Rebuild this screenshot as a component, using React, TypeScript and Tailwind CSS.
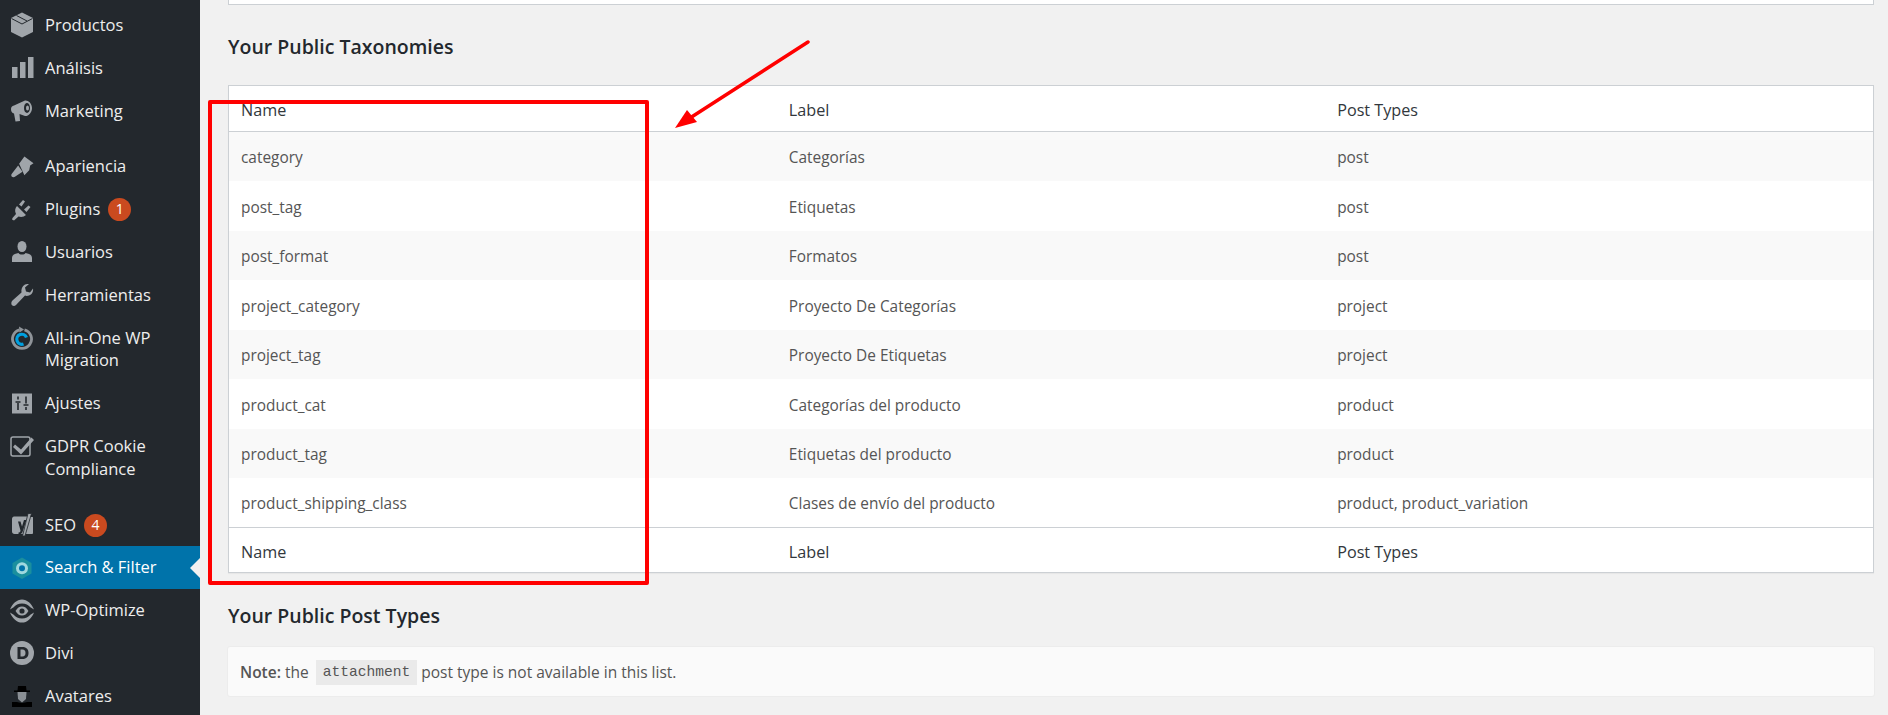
import type { ReactNode } from "react";

const font = "font-['Open_Sans','Noto_Sans',sans-serif]";

type MenuItem = {
  label: ReactNode;
  icon: ReactNode;
  badge?: number;
  active?: boolean;
  gap?: boolean;
};

const BoxIcon = (
  <svg viewBox="0 0 24 26" className="h-[26px] w-6" fill="#a0a5aa">
    <path d="M12 0.5 23 6v14l-11 5.5L1 20V6z" />
    <path d="M1.5 6.5 12 12l10.500-5.500M6.500 3.500 17 9" fill="none" stroke="#23282d" strokeWidth="1" />
  </svg>
);

const BarsIcon = (
  <svg viewBox="0 0 24 24" className="h-6 w-6" fill="#a0a5aa">
    <rect x="2" y="11" width="5.500" height="11" />
    <rect x="10" y="6" width="5.500" height="16" />
    <rect x="18" y="1" width="5.500" height="21" />
  </svg>
);

const MegaphoneIcon = (
  <svg viewBox="0 0 24 24" className="h-6 w-6" fill="#a0a5aa">
    <path d="M1 10c0-2 1-3 3-3.500l11-5c3-.5 7 2.500 7 7.500s-4 8.500-7 8l-5.500-2L10 22l-4.500.5L4 14.500C2 14 1 12.500 1 10z" />
    <ellipse cx="17" cy="9" rx="3" ry="5" fill="#23282d" />
    <ellipse cx="17.500" cy="9" rx="1.500" ry="2.500" />
  </svg>
);

const BrushIcon = (
  <svg viewBox="0 0 25 24" className="h-6 w-[25px]" fill="#a0a5aa">
    <path d="M15 1 24.500 8 21 10.500 20 15.500 15 20.500 9.500 8.500z" />
    <path d="M8.500 10.500 13 17 5.500 22c-2 1.500-5 0-4-2.500z" />
  </svg>
);

const PlugIcon = (
  <svg viewBox="0 0 24 24" className="h-6 w-6" fill="#a0a5aa">
    <path d="M7 8 16 17c-2 2-5 2.500-7.500 1.500L4 22.500l-2-1 .5-1.500L6 16C4.500 13 5 10 7 8z" />
    <path d="M9 6.500 13 2l2 1.500-3.500 5zM14 11.500l4.500-4 2 1.500-4 5z" />
  </svg>
);

const UserIcon = (
  <svg viewBox="0 0 24 24" className="h-6 w-6" fill="#a0a5aa">
    <ellipse cx="12" cy="6.500" rx="4.500" ry="5.500" />
    <path d="M2 22v-4c0-3 3-4.500 6.500-5 1 2 6 2 7 0 3.500.5 6.500 2 6.500 5v4z" />
  </svg>
);

const WrenchIcon = (
  <svg viewBox="0 0 24 24" className="h-6 w-6" fill="#a0a5aa">
    <path d="M23 5.500c.5 3-1 6-4 7-1.500.5-3 .5-4 0L6 22c-1.500 1.500-4 1-4.500-.5S1.500 18 3 17l8.500-7.500c-.5-3 .5-6.500 3.500-8 1.500-.5 3-.5 4-.5l-4 3.500 1 4 4 1z" />
  </svg>
);

const MigrationIcon = (
  <svg viewBox="0 0 24 24" className="h-6 w-6">
    <path d="M9.500 3.800A9.500 9.500 0 1 0 14.500 3.800" fill="none" stroke="#8f9499" strokeWidth="2.800" />
    <path d="M9 0.500 14 3.500 9.500 6.500z" fill="#8f9499" />
    <path d="M16.500 11.500a5 5 0 1 0-3 6.500" fill="none" stroke="#00a0e0" strokeWidth="3.200" />
  </svg>
);

const SlidersIcon = (
  <svg viewBox="0 0 24 24" className="h-6 w-6" fill="#a0a5aa">
    <path d="M2 1.500h20v20H2z" />
    <path d="M8 4.500v3M8 11v7M16 4.500v7M16 15v3M5.500 10h5M13.500 13h5" stroke="#23282d" strokeWidth="1.600" fill="none" />
  </svg>
);

const CheckIcon = (
  <svg viewBox="0 0 24 24" className="h-6 w-6">
    <rect x="1" y="3" width="19" height="19" rx="2" fill="none" stroke="#a0a5aa" strokeWidth="1.500" />
    <path d="M5 10.500 11 15.500 21.500 3.500 24 6 11 20.500 3 13z" fill="#a0a5aa" />
  </svg>
);

const YoastIcon = (
  <svg viewBox="0 0 24 24" className="h-6 w-6" fill="#a0a5aa">
    <path d="M4 3.500h14.500L13 21H4.500C3 21 2 20 2 18.500V6c0-1.500 1-2.500 2-2.500zM20 4h2.500c.5 0 .5.500.5 1v15c0 .5-.5 1-1 1h-7z" />
    <path d="M8 8.500h2.500l1.500 5 2-6.500h2.500L12.500 19c-.5 1.500-2 2.500-4 2.500v-2c1 0 2-.5 2-2L8 8.500z" fill="#23282d" />
    <path d="M18 .5h3.500L15 23h-2.500z" fill="#a0a5aa" stroke="#23282d" strokeWidth=".8" />
  </svg>
);

const HexIcon = (
  <svg viewBox="0 0 24 24" className="h-6 w-6">
    <path d="M12 1.500 21.500 7v10.500L12 23l-9.500-5.500V7z" fill="#1a8f9e" />
    <circle cx="12" cy="12.200" r="6" fill="#9fd8df" />
    <circle cx="12" cy="12.200" r="3" fill="#0073aa" />
  </svg>
);

const EyeIcon = (
  <svg viewBox="0 0 26 26" className="h-[26px] w-[26px]" fill="#a0a5aa">
    <path d="M0 11.500C2.500 5 7.500 0.500 13 0.500S23.500 5 26 11.500L22 9C20 6.500 17 5 13 5S6 6.500 4 9z" />
    <path d="M0 14.500C2.500 21 7.500 25.500 13 25.500S23.500 21 26 14.500L22 17C20 19.500 17 21 13 21S6 19.500 4 17z" />
    <path d="M6 13C8 9.500 10 8 13 8s5 1.500 7 5c-2 3.500-4 5-7 5s-5-1.500-7-5z" />
    <circle cx="13" cy="13" r="2.800" fill="#23282d" />
  </svg>
);

const DiviIcon = (
  <svg viewBox="0 0 24 24" className="h-6 w-6">
    <circle cx="12" cy="12" r="12" fill="#a0a5aa" />
    <path fillRule="evenodd" d="M7.500 6h5c4 0 6 2.500 6 6s-2 6-6 6h-5zM10.500 8.500v7h2c2 0 3-1.500 3-3.500s-1-3.500-3-3.500z" fill="#23282d" />
  </svg>
);

const AvatarIcon = (
  <svg viewBox="0 0 24 24" className="h-6 w-6">
    <path d="M2 23v-5h5c2 1 8 1 10 0h5v5z" fill="#000" />
    <path d="M7.500 8h9l-.5 7-4 3.500L8 15z" fill="#8a8f94" />
    <path d="M8 2h8l.5 4.500H20V8H4V6.500h3.500z" fill="#000" />
  </svg>
);

const menu: MenuItem[] = [
  { label: "Productos", icon: BoxIcon },
  { label: "Análisis", icon: BarsIcon },
  { label: "Marketing", icon: MegaphoneIcon },
  { label: "Apariencia", icon: BrushIcon, gap: true },
  { label: "Plugins", icon: PlugIcon, badge: 1 },
  { label: "Usuarios", icon: UserIcon },
  { label: "Herramientas", icon: WrenchIcon },
  { label: <>All-in-One WP<br />Migration</>, icon: MigrationIcon },
  { label: "Ajustes", icon: SlidersIcon },
  { label: <>GDPR Cookie<br />Compliance</>, icon: CheckIcon },
  { label: "SEO", icon: YoastIcon, badge: 4, gap: true },
  { label: "Search & Filter", icon: HexIcon, active: true },
  { label: "WP-Optimize", icon: EyeIcon },
  { label: "Divi", icon: DiviIcon },
  { label: "Avatares", icon: AvatarIcon },
];

const taxonomies = [
  ["category", "Categorías", "post"],
  ["post_tag", "Etiquetas", "post"],
  ["post_format", "Formatos", "post"],
  ["project_category", "Proyecto De Categorías", "project"],
  ["project_tag", "Proyecto De Etiquetas", "project"],
  ["product_cat", "Categorías del producto", "product"],
  ["product_tag", "Etiquetas del producto", "product"],
  ["product_shipping_class", "Clases de envío del producto", "product, product_variation"],
];

function Sidebar() {
  return (
    <aside className="w-[200px] shrink-0 bg-[#23282d] pt-[4px]">
      {menu.map((item, i) => (
        <div
          key={i}
          className={`relative flex items-start gap-[11px] py-[10px] pl-[10px] text-[16.5px] leading-[22.8px] ${item.gap ? "mt-[13px]" : ""} ${
            item.active ? "bg-[#0073aa] text-white" : "text-[#eeeeee]"
          }`}
        >
          <span className="flex h-[22.8px] w-6 shrink-0 items-center justify-center">{item.icon}</span>
          <span>{item.label}</span>
          {item.badge !== undefined && (
            <span className="-mb-1 ml-[-3px] flex h-[23px] w-[23px] items-center justify-center rounded-full bg-[#ca4a1f] text-[14px] text-white">
              {item.badge}
            </span>
          )}
          {item.active && (
            <span className="absolute right-0 top-1/2 h-0 w-0 -translate-y-1/2 border-y-[10px] border-r-[10px] border-y-transparent border-r-[#f1f1f1]" />
          )}
        </div>
      ))}
    </aside>
  );
}

function HeadRow({ bottom }: { bottom?: boolean }) {
  const cell = `px-3 text-[16.2px] text-[#32373c] ${bottom ? "pt-[5px]" : "pt-[4px]"}`;
  return (
    <tr className={bottom ? "h-[45px] border-t border-[#ccd0d4]" : "h-[46px] border-b border-[#ccd0d4]"}>
      <td className={cell}>Name</td>
      <td className={cell}>Label</td>
      <td className={cell}>Post Types</td>
    </tr>
  );
}

export default function App() {
  return (
    <div className={`relative flex h-[715px] overflow-hidden bg-[#f1f1f1] ${font}`}>
      <Sidebar />
      <main className="flex-1 pl-[28px] pr-[14px]">
        <div className="h-[5px] border-x border-b border-[#ccd0d4] bg-white" />
        <h2 className="mt-[28px] text-[19.5px] font-semibold leading-[28px] text-[#23282d]">Your Public Taxonomies</h2>
        <table className="mt-[24px] w-full table-fixed border border-[#ccd0d4] bg-white shadow-[0_1px_1px_rgba(0,0,0,0.04)]">
          <thead>
            <HeadRow />
          </thead>
          <tbody>
            {taxonomies.map((row, i) => (
              <tr key={row[0]} className={`h-[49.5px] ${i % 2 === 0 ? "bg-[#f9f9f9]" : "bg-white"}`}>
                {row.map((cell) => (
                  <td key={cell} className="px-3 pt-[3px] text-[15.4px] text-[#555555]">
                    {cell}
                  </td>
                ))}
              </tr>
            ))}
          </tbody>
          <tfoot>
            <HeadRow bottom />
          </tfoot>
        </table>
        <h2 className="mt-[29px] text-[19.5px] font-semibold leading-[28px] text-[#23282d]">Your Public Post Types</h2>
        <div className="mt-[17px] flex h-[49px] items-center rounded-[2px] bg-[#fafafa] px-3 pt-[2px] text-[15.5px] text-[#555555] shadow-[0_0_0_1px_rgba(0,0,0,0.02)]">
          <span>
            <strong className="font-semibold">Note:</strong> the
          </span>
          <code className="ml-[7px] mr-[4px] flex h-[25px] items-center bg-[#eaeaea] px-[7px] font-['Liberation_Mono',monospace] text-[14.6px]">
            attachment
          </code>
          <span>post type is not available in this list.</span>
        </div>
      </main>

      {/* annotation drawn over the screenshot */}
      <div className="pointer-events-none absolute left-[208px] top-[100px] h-[485px] w-[441px] rounded-[2px] border-4 border-[#ff0000]" />
      <svg className="pointer-events-none absolute left-0 top-0" width="1888" height="715">
        <line x1="808" y1="42" x2="690" y2="118" stroke="#ff0000" strokeWidth="3.500" strokeLinecap="round" />
        <path d="M675 128 687 110 697 122z" fill="#ff0000" />
      </svg>
    </div>
  );
}
